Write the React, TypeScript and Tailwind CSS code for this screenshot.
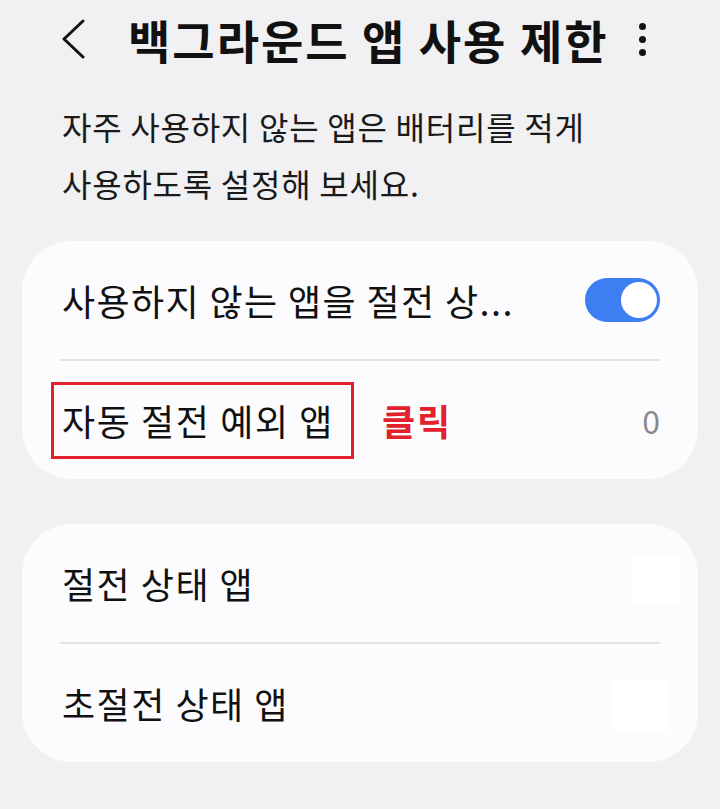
import React from 'react';

const font = { fontFamily: '"Noto Sans CJK KR", "Noto Sans", sans-serif' };

const Toggle: React.FC<{ on: boolean }> = ({ on }) => (
    <div className={`w-[75px] h-[44px] rounded-full flex items-center px-[3px] ${on ? 'bg-[#3d7ff3] justify-end' : 'bg-gray-300 justify-start'}`}>
        <div className="w-[36px] h-[36px] rounded-full bg-white" />
    </div>
);

const Row: React.FC<{ children: React.ReactNode; right?: React.ReactNode }> = ({ children, right }) => (
    <div className="h-[118px] flex items-center justify-between pl-[40px] pr-[38px]">
        {children}
        {right}
    </div>
);

const Divider = () => <div className="h-[2px] bg-[#e3e3e7] mx-[38px]" />;

export default function App() {
    return (
        <div className="w-[720px] h-[809px] bg-[#f1f1f3] text-[#111] overflow-hidden" style={font}>
            {/* Header */}
            <div className="h-[78px] flex items-center pl-[60px] pr-[74px]">
                <svg width="26" height="40" viewBox="0 0 26 40" className="shrink-0">
                    <path d="M23 2 L4 20 L23 38" fill="none" stroke="#111" strokeWidth="3" strokeLinecap="round" strokeLinejoin="round" />
                </svg>
                <h1 className="ml-[42px] text-[46px] font-bold tracking-[2px] leading-none flex-1 whitespace-nowrap">백그라운드 앱 사용 제한</h1>
                <div className="flex flex-col gap-[6px] items-center">
                    <span className="w-[7px] h-[7px] rounded-full bg-[#111]" />
                    <span className="w-[7px] h-[7px] rounded-full bg-[#111]" />
                    <span className="w-[7px] h-[7px] rounded-full bg-[#111]" />
                </div>
            </div>

            {/* Description */}
            <div className="pl-[62px] pr-[30px] pt-[20px] h-[163px]">
                <p className="text-[32px] leading-[57px] tracking-[0.75px] text-[#1a1a1a] whitespace-nowrap">
                    자주 사용하지 않는 앱은 배터리를 적게<br />사용하도록 설정해 보세요.
                </p>
            </div>

            {/* Card 1 */}
            <div className="mx-[22px] bg-[#fcfcfe] rounded-[50px]">
                <Row right={<Toggle on />}>
                    <span className="text-[36px] tracking-[1.4px] whitespace-nowrap">사용하지 않는 앱을 절전 상...</span>
                </Row>
                <Divider />
                <Row right={<span className="text-[32px] text-[#8a8a8e]">0</span>}>
                    <div className="flex items-center">
                        <div className="-ml-[11px] border-[3px] border-[#e3202c] h-[77px] w-[303px] flex items-center pl-[8px]">
                            <span className="text-[36px] tracking-[1.6px] whitespace-nowrap">자동 절전 예외 앱</span>
                        </div>
                        <span className="ml-[28px] text-[36px] font-bold tracking-[2px] text-[#e3202c]">클릭</span>
                    </div>
                </Row>
            </div>

            {/* Card 2 */}
            <div className="mx-[22px] mt-[45px] bg-[#fcfcfe] rounded-[50px]">
                <Row right={<div className="w-[49px] h-[47px] bg-white -mr-[21px] -mt-[8px]" />}>
                    <span className="text-[36px] tracking-[1.5px]">절전 상태 앱</span>
                </Row>
                <Divider />
                <Row right={<div className="w-[58px] h-[51px] bg-white -mr-[10px] mt-[2px]" />}>
                    <span className="text-[36px] tracking-[1.5px]">초절전 상태 앱</span>
                </Row>
            </div>
        </div>
    );
}
